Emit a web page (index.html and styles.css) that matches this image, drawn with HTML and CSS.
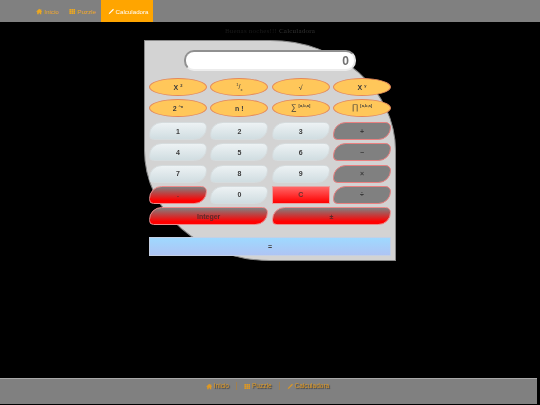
FILE: index.html
```html
<!DOCTYPE html>
<html lang="es">
<head>
<meta charset="utf-8">
<title>Calculadora</title>
<link rel="stylesheet" href="styles.css">
</head>
<body>
<svg class="defs" width="0" height="0" aria-hidden="true">
  <symbol id="i-home" viewBox="0 0 16 16"><path d="M8 1.5 0.8 8.2l1 1L3 8.2V15h3.7v-4.2h2.6V15H13V8.2l1.2 1 1-1L13 6.2V2.5h-2v1.8z" fill="currentColor"/></symbol>
  <symbol id="i-grid" viewBox="0 0 16 16"><path d="M1 2h4v3.3H1zM6 2h4v3.3H6zM11 2h4v3.3h-4zM1 6.3h4v3.4H1zM6 6.3h4v3.4H6zM11 6.3h4v3.4h-4zM1 10.7h4V14H1zM6 10.7h4V14H6zM11 10.7h4V14h-4z" fill="currentColor"/></symbol>
  <symbol id="i-pencil" viewBox="0 0 16 16"><path d="M12.5 1.5 14.5 3.5 5 13 1.5 14.5 3 11z" fill="currentColor"/></symbol>
</svg>
<header class="topbar">
  <nav class="nav">
    <a class="nav-item"><svg class="icon"><use href="#i-home"/></svg>Inicio</a>
    <a class="nav-item"><svg class="icon"><use href="#i-grid"/></svg>Puzzle</a>
    <a class="nav-item active"><svg class="icon"><use href="#i-pencil"/></svg>Calculadora</a>
  </nav>
</header>
<main class="main">
  <h1 class="greeting">Buenas noches!!! <span class="greeting-page">Calculadora</span></h1>
  <section class="calc">
    <div class="display"><span class="display-value">0</span></div>
    <div class="keys">
      <button class="key oval">X <sup>2</sup></button>
      <button class="key oval thin"><sup>1</sup>/<sub>x</sub></button>
      <button class="key oval thin">√</button>
      <button class="key oval">X <sup>y</sup></button>
      <button class="key oval">2 <sup>^n</sup></button>
      <button class="key oval">n !</button>
      <button class="key oval thin"><span class="big">∑</span> <sup class="range">[a,b,a]</sup></button>
      <button class="key oval thin"><span class="big">∏</span> <sup class="range">[a,b,a]</sup></button>
    </div>
    <div class="keys numbers">
      <button class="key num">1</button>
      <button class="key num">2</button>
      <button class="key num">3</button>
      <button class="key op">+</button>
      <button class="key num">4</button>
      <button class="key num">5</button>
      <button class="key num">6</button>
      <button class="key op">−</button>
      <button class="key num">7</button>
      <button class="key num">8</button>
      <button class="key num">9</button>
      <button class="key op">×</button>
      <button class="key danger">.</button>
      <button class="key num">0</button>
      <button class="key clear">C</button>
      <button class="key op">÷</button>
      <button class="key danger wide">Integer</button>
      <button class="key danger wide">±</button>
    </div>
    <button class="equals">=</button>
  </section>
</main>
<footer class="footer">
  <a class="foot-item"><svg class="icon"><use href="#i-home"/></svg>Inicio</a>
  <span class="sep"></span>
  <a class="foot-item"><svg class="icon"><use href="#i-grid"/></svg>Puzzle</a>
  <span class="sep"></span>
  <a class="foot-item"><svg class="icon"><use href="#i-pencil"/></svg>Calculadora</a>
</footer>
</body>
</html>
```
FILE: styles.css
```css
* { box-sizing: border-box; }
html, body { margin: 0; height: 405px; overflow: hidden; }
body {
  background: #000;
  font-family: "Liberation Sans", Arial, sans-serif;
  display: flex;
  flex-direction: column;
  filter: blur(0.3px);
}
.defs { position: absolute; }
.topbar {
  height: 22px;
  background: #808080;
  flex: none;
}
.nav { display: grid; grid-template-columns: 33px 38px 52px; height: 100%; padding-left: 30px; }
.nav-item {
  display: flex;
  align-items: center;
  gap: 1.5px;
  padding-left: 6px;
  font-size: 6.2px;
  color: #eea81e;
}
.nav-item.active {
  background: #ffa500;
  color: #fff;
  padding-left: 6.5px;
}
.icon { width: 6.5px; height: 7px; flex: none; }
.main { flex: none; display: flex; flex-direction: column; align-items: center; }
.greeting {
  margin: 4px 0 0;
  height: 14px;
  font: normal 7px/10px "Liberation Serif", "Times New Roman", serif;
  letter-spacing: 0.2px;
  color: #1a1a1a;
}
.greeting-page { color: #333; }
.calc {
  width: 252px;
  height: 221px;
  background: #d3d3d3;
  border: 1px solid #8a8a8a;
  border-radius: 0 50% 0 50%;
  padding: 9px 4px 0;
}
.display {
  width: 172px;
  height: 21px;
  margin: 0 auto 7px;
  background: #fff;
  border: 2px solid #909090;
  border-right-color: #e4e4e4;
  border-bottom-color: #ececec;
  border-radius: 10px;
  display: flex;
  align-items: center;
  justify-content: flex-end;
  padding-right: 5px;
}
.display-value { font-size: 12px; font-weight: bold; color: #707070; }
.keys {
  display: grid;
  grid-template-columns: repeat(4, 1fr);
  grid-auto-rows: 18px;
  gap: 3px 3.3px;
}
.numbers { margin-top: 5px; gap: 3.3px; }
.key {
  margin: 0;
  padding: 0;
  font: bold 7px "Liberation Sans", Arial, sans-serif;
  color: #3a3a3a;
  border: 1px solid transparent;
  line-height: 1;
}
.key sup, .key sub { font-size: 4px; line-height: 0; }
.key .range { font-weight: bold; }
.big { font-size: 8px; font-weight: normal; }
.oval {
  background: #ffc75a;
  border-color: #e4885a;
  border-radius: 50%;
}
.thin { font-weight: normal; }
.num {
  background: linear-gradient(#edf2f4, #d0dde1);
  border-color: #d6dcde;
  border-radius: 14px 6px 14px 5px;
}
.op {
  background: #808080;
  border-color: #ea8080;
  border-radius: 14px 6px 14px 5px;
}
.danger {
  background: linear-gradient(#808080, #ff0000 85%);
  border-color: #ee8a8a;
  border-radius: 14px 6px 14px 5px;
  color: #5a2a2a;
}
.wide { grid-column: span 2; }
.clear {
  background: linear-gradient(#ff6666, #ff0000);
  border-color: #e8a0a0;
  color: #663030;
  border-radius: 0;
}
.equals {
  display: block;
  width: 100%;
  height: 19px;
  margin: 12px 0 0;
  padding: 0;
  background: linear-gradient(#9fd9ff, #aec4f4);
  border: 1px solid #c4d0e4;
  font: bold 7px "Liberation Sans", Arial, sans-serif;
  color: #444;
}
.footer {
  flex: none;
  width: 537px;
  height: 26px;
  margin-top: auto;
  margin-bottom: 1px;
  background: #808080;
  border-top: 1px solid #a8a8a8;
  display: flex;
  justify-content: center;
  align-items: flex-start;
  gap: 7px;
  padding: 3px 2px 0 0;
}
.foot-item {
  display: flex;
  align-items: center;
  gap: 1.5px;
  font-size: 6.5px;
  line-height: 8px;
  color: #e09820;
  text-shadow: 1px 1px 1px #333;
}
.sep {
  width: 1px;
  height: 8px;
  background: #a08050;
}
```
